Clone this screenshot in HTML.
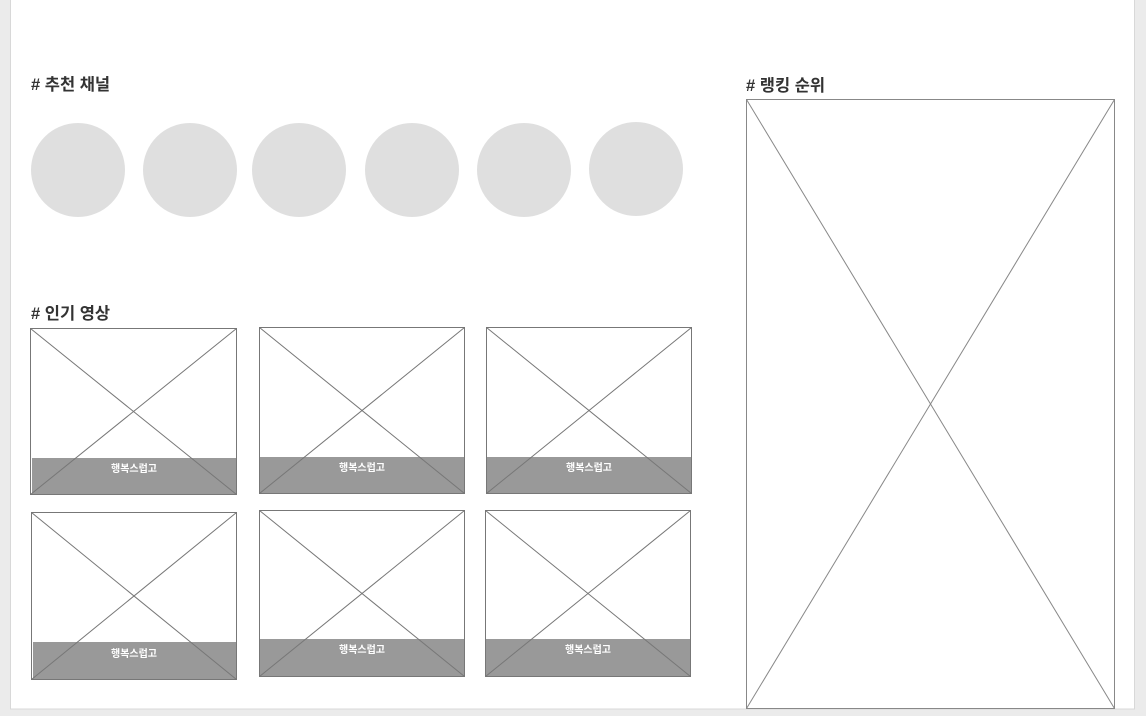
<!DOCTYPE html>
<html><head><meta charset="utf-8"><style>
html,body{margin:0;padding:0;background:#ebebeb;width:1146px;height:716px;overflow:hidden}
svg{display:block}
text{font-family:"Liberation Sans","Noto Sans CJK KR",sans-serif}
</style></head><body>
<svg width="1146" height="716" xmlns="http://www.w3.org/2000/svg">
<rect x="10.5" y="-1" width="1124" height="710" fill="#fff" stroke="#d8d8d8" stroke-width="1"/>
<g font-size="16.5" font-weight="bold" fill="#333">
<text x="31" y="90"># 추천 채널</text>
<text x="31" y="319"># 인기 영상</text>
<text x="746" y="91"># 랭킹 순위</text>
</g>
<g fill="#dfdfdf">
<circle cx="78" cy="170" r="47"/><circle cx="190" cy="170" r="47"/><circle cx="299" cy="170" r="47"/>
<circle cx="412" cy="170" r="47"/><circle cx="524" cy="170" r="47"/><circle cx="636" cy="169" r="47"/>
</g>
<g fill="none" stroke="#888" stroke-width="1">
<rect x="746.5" y="99.5" width="368" height="609"/>
<line x1="746.5" y1="99.5" x2="1114.5" y2="708.5"/><line x1="1114.5" y1="99.5" x2="746.5" y2="708.5"/>
</g>
<g font-size="10" font-weight="bold" fill="#fff" text-anchor="middle">
<g><rect x="32" y="458" width="205" height="36" fill="#999"/><rect x="30.5" y="328.5" width="206" height="166" fill="none" stroke="#777"/><path d="M30.5 328.5L236.5 494.5M236.5 328.5L30.5 494.5" stroke="#777"/><text x="134" y="472">행복스럽고</text></g>
<g><rect x="260" y="457" width="205" height="36" fill="#999"/><rect x="259.5" y="327.5" width="205" height="166" fill="none" stroke="#777"/><path d="M259.5 327.5L464.5 493.5M464.5 327.5L259.5 493.5" stroke="#777"/><text x="362" y="471">행복스럽고</text></g>
<g><rect x="487" y="457" width="205" height="36" fill="#999"/><rect x="486.5" y="327.5" width="205" height="166" fill="none" stroke="#777"/><path d="M486.5 327.5L691.5 493.5M691.5 327.5L486.5 493.5" stroke="#777"/><text x="589" y="471">행복스럽고</text></g>
<g><rect x="33" y="642" width="204" height="37" fill="#999"/><rect x="31.5" y="512.5" width="205" height="167" fill="none" stroke="#777"/><path d="M31.5 512.5L236.5 679.5M236.5 512.5L31.5 679.5" stroke="#777"/><text x="134" y="657">행복스럽고</text></g>
<g><rect x="260" y="639" width="205" height="37" fill="#999"/><rect x="259.5" y="510.5" width="205" height="166" fill="none" stroke="#777"/><path d="M259.5 510.5L464.5 676.5M464.5 510.5L259.5 676.5" stroke="#777"/><text x="362" y="653">행복스럽고</text></g>
<g><rect x="486" y="639" width="205" height="37" fill="#999"/><rect x="485.5" y="510.5" width="205" height="166" fill="none" stroke="#777"/><path d="M485.5 510.5L690.5 676.5M690.5 510.5L485.5 676.5" stroke="#777"/><text x="588" y="653">행복스럽고</text></g>
</g>
</svg>
</body></html>
